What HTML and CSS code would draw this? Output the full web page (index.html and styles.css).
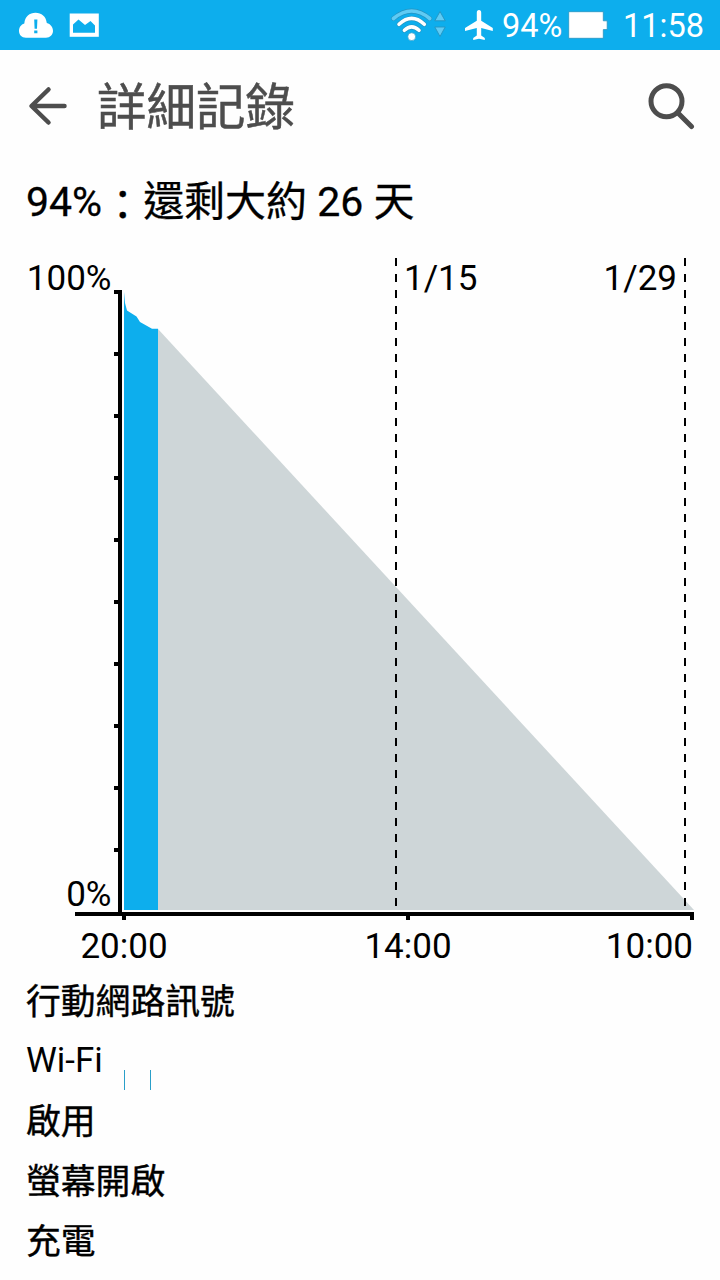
FILE: index.html
```
<!DOCTYPE html>
<html lang="zh-Hant">
	<head>
		<meta charset="UTF-8" />
		<meta name="viewport" content="width=device-width, initial-scale=1.0" />
		<title>詳細記錄</title>
		<link rel="stylesheet" href="styles.css">
	</head>
	<body>
		<div class="statusbar">
			<svg class="cloud" width="36" height="26" viewBox="0 0 36 26">
				<path fill="#fff" d="M8 25.700C3.500 25.700 1 22.700 1 19C1 15.500 3 12.500 6.300 11.500C7 4.500 11.500 .8 17.500 .8C23.500 .8 28 4.500 28.800 11C32.500 12 35 15 35 19C35 22.700 32 25.700 28 25.700Z" />
				<path fill="#0daeed" d="M16.200 7.500H19.400L19 16.800H16.600ZM16.200 18.500H19.400V21.300H16.200Z" />
			</svg>
			<svg class="photo" width="30" height="24" viewBox="0 0 30 24">
				<path fill="#fff" d="M.7 .5H29.800V23.800H.7Z" />
				<path fill="#0daeed" d="M4 19.800V11.500L9.500 6.500L16 12L21.500 8L26 12.500V19.800Z" />
			</svg>
			<svg class="wifi" width="56" height="36" viewBox="0 0 56 36">
				<g fill="none" stroke-linecap="round">
					<path stroke="#2593c0" stroke-width="4.800" d="M3.500 11.500Q21.700 -3.500 39.700 11.500" />
					<path stroke="#5fcbf4" stroke-width="3.600" d="M3.500 11.500Q21.700 -3.500 39.700 11.500" />
					<path stroke="#2593c0" stroke-width="4.800" d="M9 17.300Q21.700 5.500 34.300 17.300" />
					<path stroke="#fff" stroke-width="3.600" d="M9 17.300Q21.700 5.500 34.300 17.300" />
					<path stroke="#2593c0" stroke-width="4.800" d="M14.400 23.300Q21.700 16.500 29 23.300" />
					<path stroke="#fff" stroke-width="3.600" d="M14.400 23.300Q21.700 16.500 29 23.300" />
				</g>
				<circle cx="21.700" cy="29.700" r="3.900" fill="#fff" stroke="#2593c0" stroke-width=".6" />
				<path fill="#5fcbf4" stroke="#2593c0" stroke-width=".9" stroke-linejoin="round" d="M50 4.500L55.200 13.800H44.800ZM50 29.500L55.200 20H44.800Z" />
			</svg>
			<svg class="plane" width="30" height="32" viewBox="0 0 30 32">
				<path fill="#fff" d="M15 1C16.500 1 17.200 2.200 17.200 3.500V11.800L28.800 19V22L17.200 19V26.500L20.800 29V31L15 29.700L9.200 31V29L12.800 26.500V19L1 22V19L12.800 11.800V3.500C12.800 2.200 13.500 1 15 1Z" />
			</svg>
			<span class="percent">94%</span>
			<svg class="battery" width="40" height="28" viewBox="0 0 40 28">
				<path fill="#fff" stroke="#2593c0" stroke-width=".8" d="M.7 .7H35.300V9.800H39.200V18.600H35.300V27.300H.7Z" />
			</svg>
			<span class="clock">11:58</span>
		</div>
		<div class="header">
			<svg class="back" width="40" height="40" viewBox="0 0 40 40">
				<path d="M36.500 20H4M20.500 3.500L3.500 20L20.500 36.500" />
			</svg>
			<h1>詳細記錄</h1>
			<svg class="search" width="48" height="48" viewBox="0 0 48 48">
				<circle cx="19.500" cy="19.300" r="15.500" />
				<path d="M31 31L44.500 44.500" />
			</svg>
		</div>
		<h2>94%<span class="colon">：</span>還剩大約 26 天</h2>
		<svg class="chart" width="720" height="720" viewBox="0 250 720 720">
			<!-- projected and used battery -->
			<path class="projected" d="M158 329L694 910H158Z" />
			<path class="used" d="M124 292L125 303L127 310.500L136.500 316.500L140 322L152 328.800H158V910H124Z" />
			<!-- axes -->
			<path class="axis" d="M120 290V914M75 914H694" />
			<path class="axis" d="M114 292H120M114 354H120M114 416H120M114 478H120M114 540H120M114 602H120M114 664H120M114 726H120M114 788H120M114 850H120" />
			<path class="axis" d="M124 914V920M408 914V920M692 914V920" />
			<path class="day" d="M396 258V906M685 258V906" />
			<g text-anchor="end">
				<text x="111.500" y="290">100%</text>
				<text x="111.500" y="906">0%</text>
				<text x="677" y="290">1/29</text>
				<text x="693" y="958">10:00</text>
			</g>
			<text x="404" y="290">1/15</text>
			<g text-anchor="middle">
				<text x="124" y="958">20:00</text>
				<text x="408" y="958">14:00</text>
			</g>
		</svg>
		<div class="rows">
			<div class="row">行動網路訊號</div>
			<div class="row wide">
				Wi-Fi
				<svg class="marks" width="27" height="20">
					<path d="M.5 0V20M26.500 0V20" />
				</svg>
			</div>
			<div class="row">啟用</div>
			<div class="row">螢幕開啟</div>
			<div class="row">充電</div>
		</div>
	</body>
</html>
```

FILE: styles.css
```
body {
	margin: 0;
	width: 720px;
	height: 1280px;
	overflow: hidden;
	background-color: #fefefe;
	color: #000;
	font-family: Roboto, "Noto Sans CJK TC", sans-serif;
}
svg {
	display: block;
	flex: none;
}
.statusbar {
	display: flex;
	align-items: center;
	height: 50px;
	padding-left: 18px;
	background-color: #0daeed;
	color: #fff;
	font-size: 32.5px;
	line-height: 50px;
	white-space: nowrap;
}
.photo {
	margin-left: 15px;
}
.wifi {
	margin-left: 291px;
}
.plane {
	margin-left: 18px;
}
.percent {
	width: 61px;
	margin: 2px 0 0 8px;
}
.battery {
	margin-left: 5px;
}
.clock {
	margin: 2px 0 0 15px;
}
.header {
	display: flex;
	align-items: center;
	height: 112px;
	padding: 0 25px 0 28px;
	color: #4d4d4d;
}
.back,
.search {
	fill: none;
	stroke: #4d4d4d;
	stroke-width: 4.5;
	stroke-linecap: round;
	stroke-linejoin: round;
}
.search {
	margin-left: auto;
	stroke-width: 5;
}
h1 {
	margin: 0 0 0 29px;
	padding-top: 3px;
	font-size: 49.5px;
	font-weight: normal;
	line-height: 112px;
	-webkit-text-stroke: 0.5px #4d4d4d;
}
h2 {
	height: 88px;
	margin: 0;
	padding-left: 26px;
	font-size: 41px;
	font-weight: normal;
	line-height: 80px;
	-webkit-text-stroke: 0.3px #000;
}
.colon {
	position: relative;
	top: 4px;
}
.chart {
	font-size: 35px;
}
.projected {
	fill: #ced6d8;
}
.used {
	fill: #0daeed;
}
.axis {
	fill: none;
	stroke: #000;
	stroke-width: 4;
}
.day {
	stroke: #000;
	stroke-width: 2;
	stroke-dasharray: 8 8;
}
.row {
	display: flex;
	height: 60px;
	padding-left: 26px;
	font-size: 34.8px;
	line-height: 65px;
	-webkit-text-stroke: 0.4px #000;
}
.wide {
	line-height: 61px;
	-webkit-text-stroke: 0;
}
.marks {
	margin: 40px 0 0 21px;
	stroke: #2a9fc9;
}
```
